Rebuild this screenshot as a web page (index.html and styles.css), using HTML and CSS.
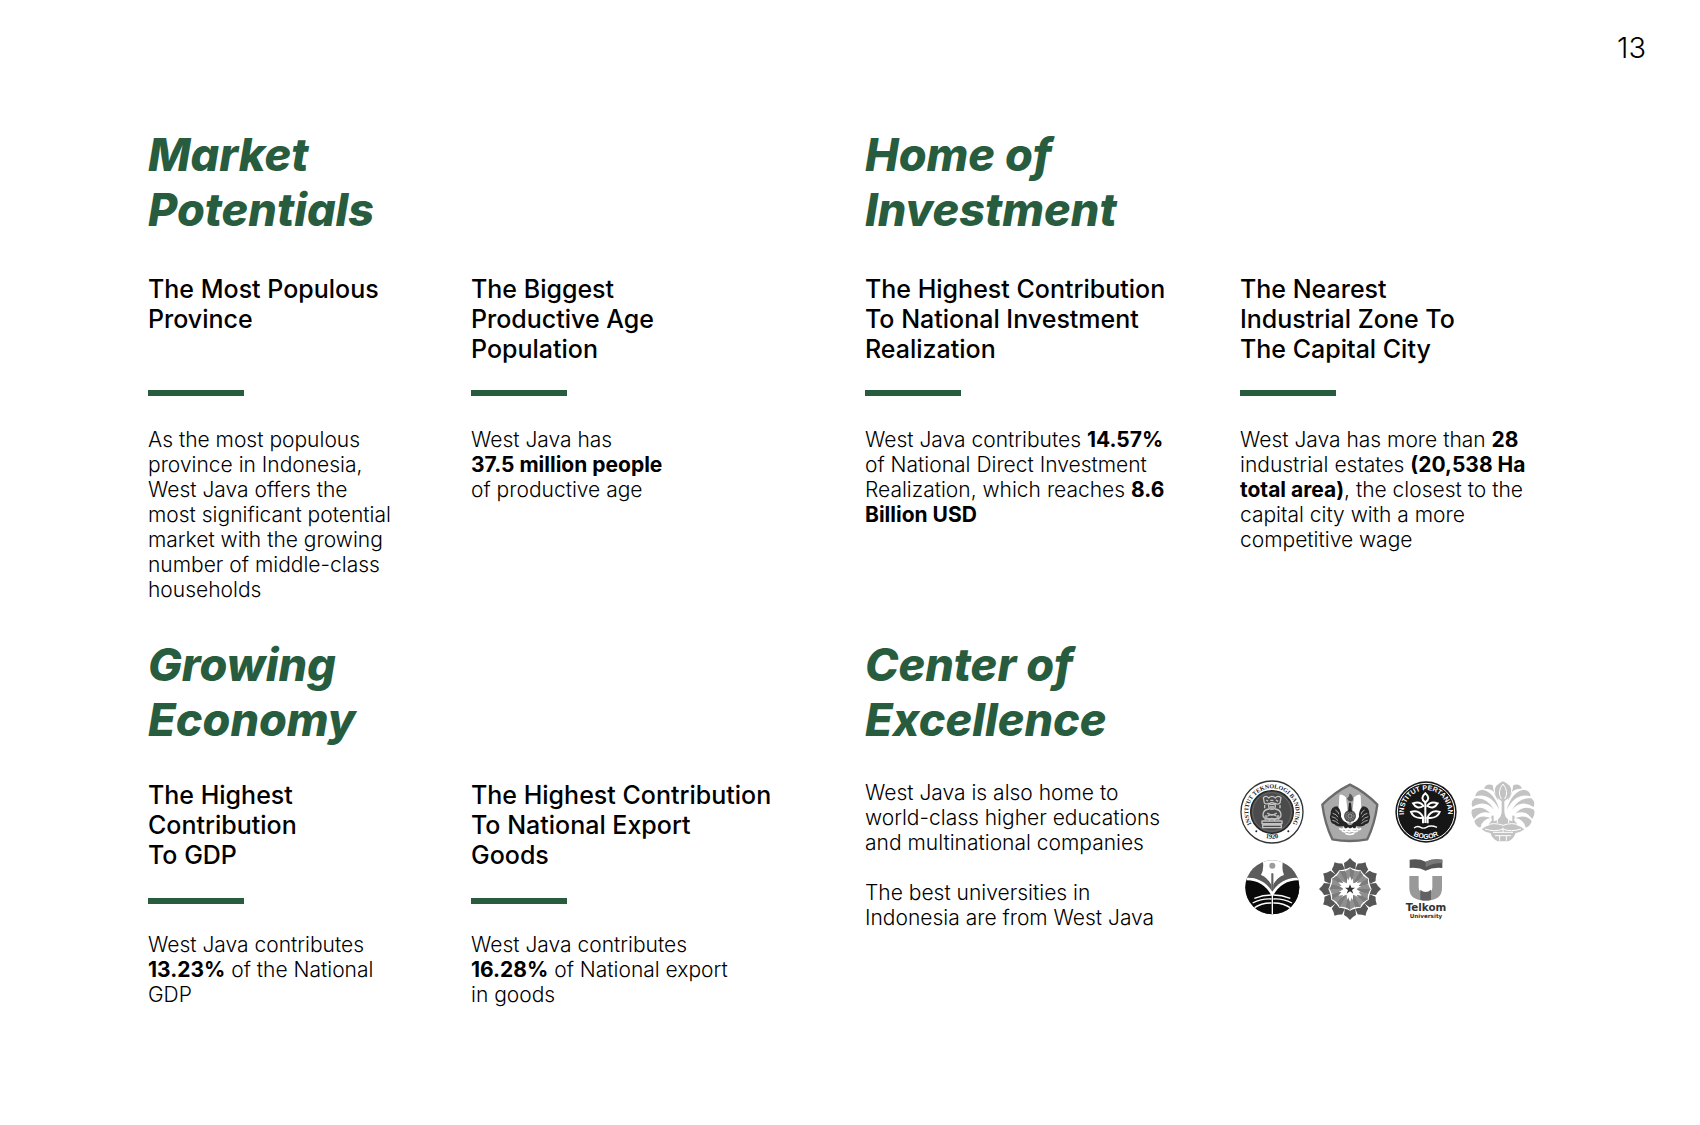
FILE: index.html
```html
<!DOCTYPE html>
<html lang="en">
<head>
<meta charset="utf-8">
<meta name="viewport" content="width=device-width, initial-scale=1">
<title>West Java at a glance</title>
<link rel="stylesheet" href="styles.css">
</head>
<body>
<header class="page-number">13</header>
<main class="board">
  <section class="topic">
    <h2>Market<br>Potentials</h2>
    <div class="facts facts-left">
      <article class="fact">
        <h3>The Most Populous<br>Province</h3>
        <p>As the most populous<br>province in Indonesia,<br>West Java offers the<br>most significant potential<br>market with the growing<br>number of middle-class<br>households</p>
      </article>
      <article class="fact">
        <h3>The Biggest<br>Productive Age<br>Population</h3>
        <p>West Java has<br><b>37.5 million people</b><br>of productive age</p>
      </article>
    </div>
  </section>
  <section class="topic">
    <h2>Home of<br>Investment</h2>
    <div class="facts facts-right">
      <article class="fact">
        <h3>The Highest Contribution<br>To National Investment<br>Realization</h3>
        <p>West Java contributes <b>14.57%</b><br>of National Direct Investment<br>Realization, which reaches <b>8.6<br>Billion USD</b></p>
      </article>
      <article class="fact">
        <h3>The Nearest<br>Industrial Zone To<br>The Capital City</h3>
        <p>West Java has more than <b>28</b><br>industrial estates <b>(20,538 Ha<br>total area)</b>, the closest to the<br>capital city with a more<br>competitive wage</p>
      </article>
    </div>
  </section>
  <section class="topic topic-compact">
    <h2>Growing<br>Economy</h2>
    <div class="facts facts-left">
      <article class="fact">
        <h3>The Highest<br>Contribution<br>To GDP</h3>
        <p>West Java contributes<br><b>13.23%</b> of the National<br>GDP</p>
      </article>
      <article class="fact">
        <h3>The Highest Contribution<br>To National Export<br>Goods</h3>
        <p>West Java contributes<br><b>16.28%</b> of National export<br>in goods</p>
      </article>
    </div>
  </section>
  <section class="topic topic-compact">
    <h2>Center of<br>Excellence</h2>
    <div class="facts facts-right">
      <div class="prose">
        <p>West Java is also home to<br>world-class higher educations<br>and multinational companies</p>
        <p>The best universities in<br>Indonesia are from West Java</p>
      </div>
      <div class="logos">
        <svg viewBox="0 0 192 192" role="img" aria-label="Institut Teknologi Bandung">
          <defs>
            <path id="itb-arc" d="M43 143A71 71 0 1 1 149 143"/>
            <path id="itb-base" d="M50 162A81 81 0 0 0 142 162"/>
          </defs>
          <circle cx="96" cy="96" r="93" fill="#fff" stroke="#333" stroke-width="4"/>
          <circle cx="96" cy="96" r="64" fill="#4b4b4b" stroke="#222" stroke-width="4"/>
          <circle cx="96" cy="96" r="58" fill="none" stroke="#777" stroke-width="2"/>
          <text class="seal-serif" fill="#222"><textPath href="#itb-arc" startOffset="50%" text-anchor="middle">INSTITUT TEKNOLOGI BANDUNG</textPath></text>
          <text class="seal-year" fill="#222"><textPath href="#itb-base" startOffset="50%" text-anchor="middle">1920</textPath></text>
          <circle cx="49" cy="154" r="3" fill="#222"/><circle cx="145" cy="154" r="3" fill="#222"/>
          <g fill="none" stroke="#c4c4c4" stroke-width="4" stroke-linejoin="round">
            <path d="M70 53q8-8 16 1q10-10 20 0q8-9 17-1l-3 16q-8 6-14 1q-10 7-20 0q-8 4-13-1z"/>
            <circle cx="96" cy="78" r="10"/>
            <path d="M88 87q-18 1-19 17q0 12 15 13h24q15-1 15-13q-1-16-19-17M74 75v10M120 75v10M82 99q14 12 28 0M83 108q13-8 26 0"/>
            <path d="M66 123h60v8H66zM68 135h56v8H68zM74 119q8-8 15 0q7-8 14 0q8-8 15 0M79 60l5 4M108 60l6 4M91 61h9"/>
          </g>
          <g fill="#aaa"><circle cx="78" cy="110" r="5"/><circle cx="114" cy="110" r="5"/><path d="M89 78h14v9H89z"/></g>
        </svg>
        <svg viewBox="0 0 192 192" role="img" aria-label="Universitas Padjadjaran">
          <path d="M99 14Q144 36 181 74Q174 130 151 178Q98 188 46 178Q23 130 16 74Q54 36 99 14Z" fill="#aaa" stroke="#6b6b6b" stroke-width="7" stroke-linejoin="round"/>
          <path d="M87 52q-16-14-20-5l-2 41q2 35 31 42zM111 52q16-14 20-5l2 41q-2 35-31 42z" fill="#fff"/>
          <g fill="#252525">
            <path d="M76 139q-18 2-23-6q-11-2-12-12q-5-10 0-19q0-22 20-23q13 14 11 31q6 15 15 17l7 7zM122 139q18 2 23-6q11-2 12-12q5-10 0-19q0-22-20-23q-13 14-11 31q-6 15-15 17l-7 7z"/>
            <circle cx="99" cy="108" r="18" fill="#555"/>
            <path d="M96 68h6l3 29H93z"/><path d="M90 56q8-7 8-16q14 11 9 22q-9 7-17-6z" fill="#555"/>
            <path d="M76 127q23 17 46 0l-7 17H83z"/>
          </g>
          <g fill="none" stroke="#aaa" stroke-width="3"><path d="M47 100q12 2 16 12M44 110q12 2 19 12M46 121q10 1 19 10M55 90q9 4 11 13M151 100q-12 2-16 12M154 110q-12 2-19 12M152 121q-10 1-19 10M143 90q-9 4-11 13"/></g>
          <g fill="none" stroke="#bbb" stroke-width="2"><circle cx="99" cy="108" r="12" stroke-dasharray="4 3"/><circle cx="99" cy="108" r="6"/></g>
          <g fill="none" stroke="#fff" stroke-width="5"><path d="M67 145q6 8 13 0q6 8 13 0q6 8 13 0q6 8 13 0q6 8 13 0M75 152q8 7 14 0q8 7 16 0q8 7 18 0M85 160q13 7 27 0"/></g>
        </svg>
        <svg viewBox="0 0 192 192" role="img" aria-label="Institut Pertanian Bogor">
          <defs>
            <path id="ipb-arc" d="M43 136A66 66 0 1 1 149 136"/>
            <path id="ipb-base" d="M40 153A79 79 0 0 0 152 153"/>
          </defs>
          <circle cx="96" cy="96" r="92" fill="#161616"/>
          <circle cx="96" cy="96" r="86" fill="none" stroke="#fff" stroke-width="3"/>
          <text class="seal-sans" fill="#fff"><textPath href="#ipb-arc" startOffset="50%" text-anchor="middle">INSTITUT PERTANIAN</textPath></text>
          <text class="seal-sans" fill="#fff"><textPath href="#ipb-base" startOffset="50%" text-anchor="middle">BOGOR</textPath></text>
          <g fill="none" stroke="#fff" stroke-width="6">
            <path d="M94 40q-18 15 0 27q18-12 0-27zM57 70q22-7 31 8q-20 12-31-8zM131 70q-22-7-31 8q20 12 31-8zM51 96q25-8 37 17q-29 4-37-17zM137 96q-25-8-37 17q29 4 37-17z"/>
            <path d="M94 67v62M87 112v18M101 112v18"/>
            <path d="M60 144q10-8 20-2q8 5 17 0q13-8 32 0" stroke-width="4"/>
          </g>
        </svg>
        <svg viewBox="0 0 192 192" role="img" aria-label="Universitas Indonesia">
          <g fill="#c3c3c3">
            <path d="M96 4q-28 12-24 31q3 18 20 29v35h8V64q17-11 20-29Q124 16 96 4z"/>
            <path d="M65 15Q45 9 39 26q36-2 43 36Q69 46 65 15zM127 15q20-6 26 11q-36-2-43 36q13-16 17-47z"/>
            <path d="M34 29Q15 31 13 49q44-13 72 40Q69 35 34 29zM158 29q19 2 21 20q-44-13-72 40q16-54 51-60z"/>
            <path d="M11 55Q-2 65 4 81q37-25 65 8Q48 51 11 55zM181 55q13 10 7 26q-37-25-65 8q21-38 58-34z"/>
            <path d="M3 89Q-2 105 9 117q20-29 49-17Q34 73 3 89zM189 89q5 16-6 28q-20-29-49-17q24-27 55-11z"/>
            <path d="M10 123q3 16 18 20q6-26 31-29Q27 101 10 123zM182 123q-3 16-18 20q-6-26-31-29q32-13 49 9z"/>
            <path d="M32 148q18-18 64-16q46-2 64 16q-12 10-26 11q-6 18-22 25H80q-16-7-22-25q-14-1-26-11z"/>
            <path d="M92 97q-3 23-24 27v-17q-11-2-5 13l-12 15h90l-12-15q6-15-5-13v17q-21-4-24-27z"/>
          </g>
          <g fill="none" stroke="#fff" stroke-width="3"><path d="M96 12q-19 23-5 45M96 12q19 23 5 45M45 136q24-10 51 0q27-10 51 0M42 147q30 10 54 0q24 10 54 0M79 112v17M113 112v17M66 157h60M72 167h48M86 168v14M106 168v14M96 143v16"/></g>
        </svg>
        <svg viewBox="0 0 192 192" role="img" aria-label="Universitas Pendidikan Indonesia">
          <clipPath id="upi-disc"><circle cx="97" cy="91" r="81"/></clipPath>
          <g clip-path="url(#upi-disc)">
            <path d="M14 6h166v165H14z" fill="#5c5c5c"/>
            <path d="M15 61q55-2 82 48q27-50 84-48v114H15z" fill="#090909"/>
            <path d="M67 5h64q-8 30 1 49q-19 5-35 33Q80 59 63 54q11-20 4-49z" fill="#fff"/>
            <path d="M15 66q54-3 82 46q28-49 84-46" fill="none" stroke="#fff" stroke-width="8"/>
            <path d="M97 104v68M43 124q26-10 51-10M38 138q28-14 56-12M40 154q26-17 54-16M151 124q-26-10-51-10M156 138q-28-14-56-12M154 154q-26-17-54-16" fill="none" stroke="#fff" stroke-width="4"/>
          </g>
          <circle cx="97" cy="26" r="9" fill="#9b9b9b"/>
          <path d="M97 49v49" stroke="#858585" stroke-width="7"/>
          <path d="M97 49v49" stroke="#444" stroke-width="2"/>
        </svg>
        <svg viewBox="0 0 192 192" role="img" aria-label="Universitas Siliwangi">
          <defs>
            <g id="petal">
              <path d="M99 3q8 10 18 15l-2 19q-9-2-16-6q-7 4-16 6l-2-19q10-5 18-15z" fill="#565656"/>
              <path d="M99 34q6 5 14 7q1 17-14 35q-15-18-14-35q8-2 14-7z" fill="#909090"/>
              <path d="M99 34q6 5 14 7q1 17-14 35z" fill="#7c7c7c"/>
            </g>
          </defs>
          <use href="#petal"/><use href="#petal" transform="rotate(30 99 96)"/><use href="#petal" transform="rotate(60 99 96)"/><use href="#petal" transform="rotate(90 99 96)"/><use href="#petal" transform="rotate(120 99 96)"/><use href="#petal" transform="rotate(150 99 96)"/><use href="#petal" transform="rotate(180 99 96)"/><use href="#petal" transform="rotate(210 99 96)"/><use href="#petal" transform="rotate(240 99 96)"/><use href="#petal" transform="rotate(270 99 96)"/><use href="#petal" transform="rotate(300 99 96)"/><use href="#petal" transform="rotate(330 99 96)"/>
          <path d="M99 58l9 22 26-4-17 20 17 20-26-4-9 22-9-22-26 4 17-20-17-20 26 4z" fill="#fff"/>
          <path d="M99 82l4 10h11l-9 7 4 11-10-7-10 7 4-11-9-7h11z" fill="#333"/>
        </svg>
        <svg viewBox="0 0 192 192" role="img" aria-label="Telkom University">
          <path d="M47 8q29-4 48 6q22-10 50-6v25q-29-3-50 8q-20-11-48-8z" fill="#555"/>
          <path d="M95 14q22-10 50-6v10q-30 0-50 13z" fill="#777"/>
          <path d="M46 57h28v35q0 15 21 15q20 0 20-15V57h29v37q0 37-49 37T46 94z" fill="#999"/>
          <path d="M79 98q16 14 32 0v30q-16 5-32 0z" fill="#626262"/>
          <text class="telkom-name" x="96" y="161" text-anchor="middle" fill="#333">Telkom</text>
          <text class="telkom-sub" x="96" y="184" text-anchor="middle" fill="#333">University</text>
        </svg>
      </div>
    </div>
  </section>
</main>
</body>
</html>
```
FILE: styles.css
```css
* {
  box-sizing: border-box;
}

body {
  margin: 0;
  background: #fff;
  color: #000;
  font-family: Inter, "Noto Sans", sans-serif;
  font-size: 21px;
  font-weight: 300;
  line-height: 25px;
}

h2,
h3,
p {
  margin: 0;
}

b {
  font-weight: 700;
}

.page-number {
  padding: 30px 54px 0 0;
  font-size: 29px;
  line-height: 36px;
  text-align: right;
}

.board {
  display: grid;
  grid-template-columns: 717fr 835fr;
  row-gap: 35px;
  padding: 61px 0 112px 148px;
}

.topic h2 {
  margin-bottom: 37px;
  color: #285c3e;
  font-size: 45px;
  font-style: italic;
  font-weight: 800;
  line-height: 55px;
}

.topic-compact h2 {
  margin-bottom: 33px;
}

.facts {
  display: grid;
}

.facts-left {
  grid-template-columns: 323fr 394fr;
}

.facts-right {
  grid-template-columns: 375fr 460fr;
}

.fact h3 {
  min-height: 90px;
  font-size: 25px;
  font-weight: 500;
  line-height: 30px;
}

.fact p::before {
  content: "";
  display: block;
  width: 96px;
  height: 6px;
  margin: 26px 0 31px;
  background: #285c3e;
}

.topic-compact .fact p::before {
  margin: 28px 0;
}

.prose {
  display: grid;
  gap: 25px;
  align-content: start;
}

.logos {
  display: grid;
  grid-template-columns: repeat(4, 64px);
  grid-auto-rows: 64px;
  gap: 13px;
}

.seal-serif {
  font: bold 18px "Liberation Serif", serif;
}

.seal-year {
  font: bold 20px "Liberation Serif", serif;
}

.seal-sans {
  font: bold 21px "Liberation Sans", sans-serif;
}

.telkom-name {
  font: bold 31px "DejaVu Sans", sans-serif;
}

.telkom-sub {
  font: bold 17px "DejaVu Sans", sans-serif;
}
```
